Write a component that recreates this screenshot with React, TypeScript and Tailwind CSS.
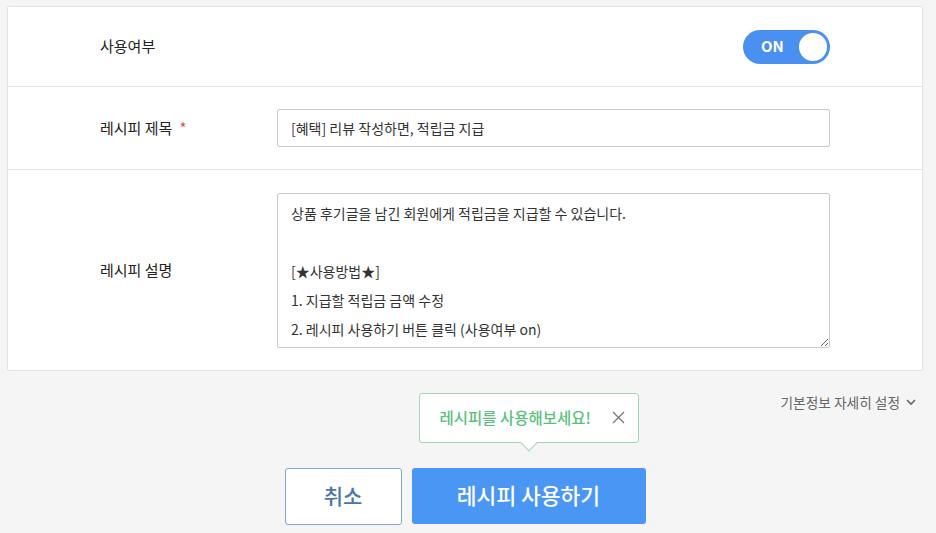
import { useState } from 'react';

const font = { fontFamily: '"Noto Sans CJK KR", "Noto Sans", sans-serif' };

const Row = ({ label, required, children, className }: { label: string; required?: boolean; children: React.ReactNode; className?: string }) => (
  <div className={`flex items-center border-b border-[#e6e6e6] pl-[92px] pr-[92px] last:border-b-0 ${className ?? ''}`}>
    <div className="w-[177px] shrink-0 text-[15px] text-[#222]">
      {label}
      {required && <span className="ml-[7px] text-[#e05050]">*</span>}
    </div>
    <div className="flex flex-1 justify-end">{children}</div>
  </div>
);

export default function App() {
  const [on, setOn] = useState(true);
  const [showTip, setShowTip] = useState(true);

  return (
    <div className="min-h-[533px] w-[936px] bg-[#f5f5f5] pt-[6px]" style={font}>
      <div className="ml-[7px] w-[916px] rounded-[2px] border border-[#e3e3e3] bg-white">
        <Row label="사용여부" className="h-[80px]">
          <button
            onClick={() => setOn(!on)}
            className="flex h-[34px] w-[87px] items-center justify-between rounded-full bg-[#4a90f0] pl-[18px] pr-[1px]"
          >
            <span className="text-[15px] font-bold text-white">ON</span>
            <span className="h-[32px] w-[32px] rounded-full border-2 border-[#4a90f0] bg-white" />
          </button>
        </Row>
        <Row label="레시피 제목" required className="h-[83px]">
          <div className="flex h-[38px] w-full items-center rounded-[2px] border border-[#c9c9c9] px-[13px] text-[14px] text-[#333]">
            [혜택] 리뷰 작성하면, 적립금 지급
          </div>
        </Row>
        <Row label="레시피 설명" className="h-[200px]">
          <textarea
            className="h-[155px] w-full resize-y rounded-[2px] border border-[#c9c9c9] px-[13px] pt-[5px] text-[14px] leading-[29px] text-[#333] outline-none"
            defaultValue={'상품 후기글을 남긴 회원에게 적립금을 지급할 수 있습니다.\n\n[★사용방법★]\n1. 지급할 적립금 금액 수정\n2. 레시피 사용하기 버튼 클릭 (사용여부 on)'}
          />
        </Row>
      </div>

      <div className="mt-[21px] flex justify-end pr-[20px]">
        <div className="flex items-center gap-[6px] text-[13.7px] text-[#666]">
          기본정보 자세히 설정
          <svg width="10" height="7" viewBox="0 0 10 7" fill="none" stroke="#666" strokeWidth="1.6">
            <path d="M1 1l4 4 4-4" />
          </svg>
        </div>
      </div>

      <div className="ml-[7px] mt-[55px] flex w-[916px] justify-center gap-[10px]">
        <button className="h-[57px] w-[117px] rounded-[3px] border border-[#7ea8d8] bg-white text-[21px] font-medium text-[#4a76ad]">
          취소
        </button>
        <div className="relative">
          {showTip && (
            <div className="absolute bottom-[82px] left-1/2 flex h-[50px] w-[220px] -translate-x-1/2 items-center justify-between rounded-[3px] border border-[#9fd8b3] bg-white pl-[20px] pr-[13px]">
              <span className="text-[15.5px] font-medium text-[#5cbf7d]">레시피를 사용해보세요!</span>
              <button onClick={() => setShowTip(false)} className="flex items-center">
                <svg width="13" height="13" viewBox="0 0 13 13" stroke="#777" strokeWidth="1.3">
                  <path d="M1 1l11 11M12 1L1 12" />
                </svg>
              </button>
              <span className="absolute -bottom-[7px] left-1/2 h-[12px] w-[12px] -translate-x-1/2 rotate-45 border-b border-r border-[#9fd8b3] bg-white" />
            </div>
          )}
          <button className="h-[56px] w-[234px] rounded-[3px] bg-[#4a96f5] text-[21.5px] font-medium text-white">레시피 사용하기</button>
        </div>
      </div>
    </div>
  );
}
